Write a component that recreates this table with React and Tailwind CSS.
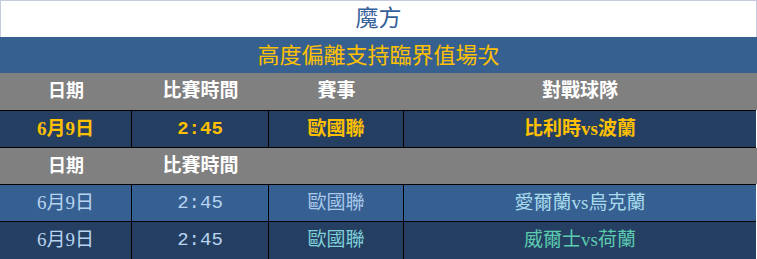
import React from "react";

const serif = { fontFamily: '"Liberation Serif", "Noto Sans CJK TC", serif' };
const mono = { fontFamily: '"Liberation Mono", monospace' };

const cols = "grid grid-cols-[132px_137px_135px_352px]";

const upcoming = [
  { date: "6月9日", time: "2:45", league: "歐國聯", teams: "愛爾蘭vs烏克蘭", bg: "bg-[#366092]", team: "text-[#a8dcec]", lg: "text-[#a9c8ea]" },
  { date: "6月9日", time: "2:45", league: "歐國聯", teams: "威爾士vs荷蘭", bg: "bg-[#243f62]", team: "text-[#5ccbb0]", lg: "text-[#7fd0d8]" },
];

const Cell = ({ children, last, className = "" }) => (
  <div className={`flex items-center justify-center ${last ? "" : "border-r border-black"} ${className}`}>
    {children}
  </div>
);

export default function App() {
  return (
    <div className="w-[757px] h-[259px] bg-white text-[19px]" style={serif}>
      <div className="h-[37px] border-t border-l border-r border-[#c5cce0] bg-white flex items-center justify-center text-[23px] text-[#36609a]">
        魔方
      </div>
      <div className="h-[36px] bg-[#366090] flex items-center justify-center text-[22px] text-[#ffc000]">
        高度偏離支持臨界值場次
      </div>
      <div className={`${cols} h-[37px] bg-[#808080] text-white font-bold`}>
        <div className="flex items-center justify-center text-[18px]">日期</div>
        <div className="flex items-center justify-center">比賽時間</div>
        <div className="flex items-center justify-center">賽事</div>
        <div className="flex items-center justify-center">對戰球隊</div>
      </div>
      <div className={`${cols} w-[756px] h-[38px] bg-[#243f62] border-y border-black text-[#ffc000] font-bold`}>
        <Cell>6月9日</Cell>
        <Cell><span style={mono}>2:45</span></Cell>
        <Cell>歐國聯</Cell>
        <Cell last>比利時vs波蘭</Cell>
      </div>
      <div className={`${cols} h-[36px] bg-[#808080] text-white font-bold`}>
        <div className="flex items-center justify-center text-[18px]">日期</div>
        <div className="flex items-center justify-center">比賽時間</div>
        <div />
        <div />
      </div>
      {upcoming.map((m, i) => (
        <div
          key={i}
          className={`${cols} w-[756px] ${i === 0 ? "h-[37px]" : "h-[38px]"} ${m.bg} border-t border-black text-[#b8d4f0]`}
        >
          <Cell>{m.date}</Cell>
          <Cell><span style={mono}>{m.time}</span></Cell>
          <Cell className={m.lg}>{m.league}</Cell>
          <Cell last className={m.team}>{m.teams}</Cell>
        </div>
      ))}
    </div>
  );
}
